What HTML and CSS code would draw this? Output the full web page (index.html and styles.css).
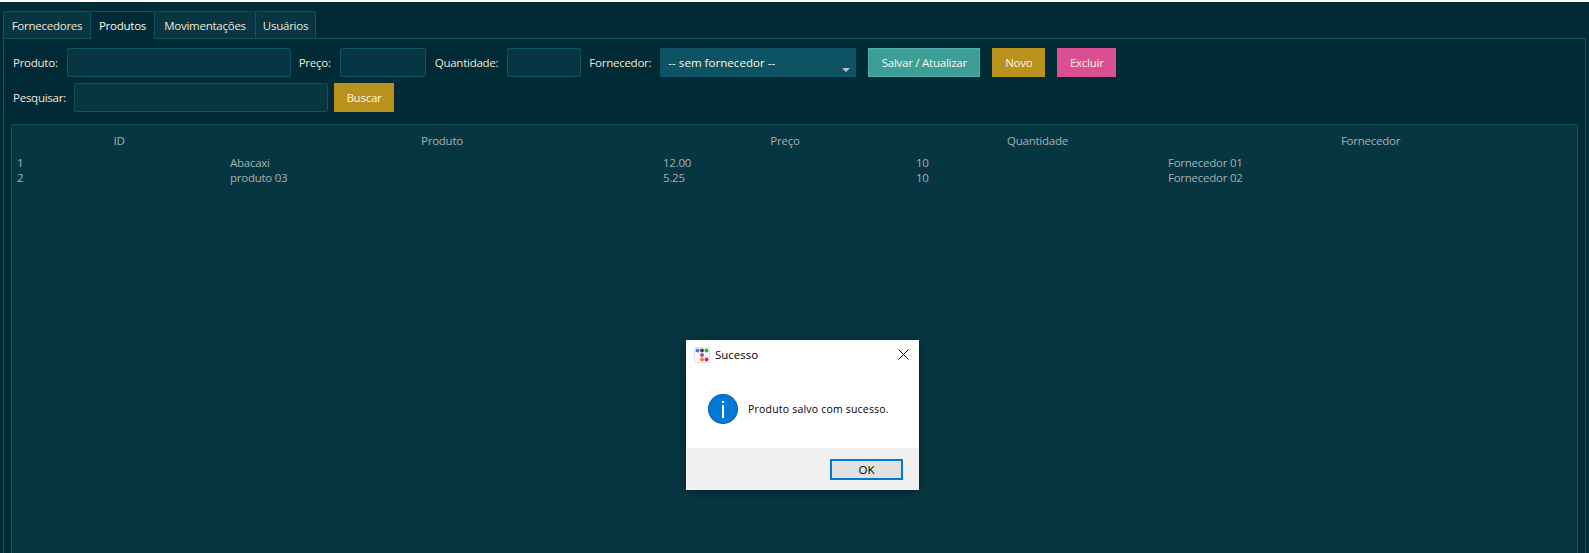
FILE: index.html
```html
<!DOCTYPE html>
<html lang="pt-BR">
<head>
    <meta charset="UTF-8">
    <title>Produtos</title>
    <link rel="stylesheet" href="styles.css">
</head>
<body>
    <div class="app">
        <nav class="tabs">
            <div class="tab tab-fornecedores">Fornecedores</div>
            <div class="tab tab-produtos tab-ativa">Produtos</div>
            <div class="tab tab-movimentacoes">Movimentações</div>
            <div class="tab tab-usuarios">Usuários</div>
        </nav>
        <main class="pane">
            <div class="linha">
                <label class="rotulo">Produto:</label>
                <input class="campo campo-produto" type="text">
                <label class="rotulo">Preço:</label>
                <input class="campo campo-preco" type="text">
                <label class="rotulo">Quantidade:</label>
                <input class="campo campo-qtd" type="text">
                <label class="rotulo">Fornecedor:</label>
                <div class="combo">-- sem fornecedor --<span class="combo-seta"></span></div>
                <button class="btn btn-salvar">Salvar / Atualizar</button>
                <button class="btn btn-novo">Novo</button>
                <button class="btn btn-excluir">Excluir</button>
            </div>
            <div class="linha linha-busca">
                <label class="rotulo rotulo-busca">Pesquisar:</label>
                <input class="campo campo-busca" type="text">
                <button class="btn btn-buscar">Buscar</button>
            </div>
            <div class="painel-tabela">
                <table class="tabela">
                    <colgroup>
                        <col class="col-id">
                        <col class="col-produto">
                        <col class="col-preco">
                        <col class="col-qtd">
                        <col>
                    </colgroup>
                    <thead>
                        <tr>
                            <th>ID</th>
                            <th>Produto</th>
                            <th>Preço</th>
                            <th>Quantidade</th>
                            <th>Fornecedor</th>
                        </tr>
                    </thead>
                    <tbody>
                        <tr>
                            <td>1</td>
                            <td>Abacaxi</td>
                            <td>12.00</td>
                            <td>10</td>
                            <td>Fornecedor 01</td>
                        </tr>
                        <tr>
                            <td>2</td>
                            <td>produto 03</td>
                            <td>5.25</td>
                            <td>10</td>
                            <td>Fornecedor 02</td>
                        </tr>
                    </tbody>
                </table>
            </div>
        </main>
    </div>

    <div class="dialogo">
        <div class="dialogo-titulo">
            <svg class="dialogo-logo" width="16" height="16" viewBox="0 0 16 16">
                <rect x="0.5" y="0.5" width="15" height="15" fill="#fafafa" stroke="#e6e6e6"/>
                <circle cx="3.5" cy="3.5" r="2" fill="#3b82f6"/>
                <circle cx="8" cy="3.5" r="2" fill="#444444"/>
                <circle cx="12.5" cy="3.5" r="2" fill="#43b02a"/>
                <circle cx="8" cy="8" r="2" fill="#9b4fb8"/>
                <circle cx="8" cy="12.5" r="2" fill="#f47b20"/>
                <circle cx="12.5" cy="12.5" r="2" fill="#e8204e"/>
            </svg>
            <span class="dialogo-nome">Sucesso</span>
            <svg class="dialogo-fechar" width="11" height="11" viewBox="0 0 11 11">
                <path d="M0.5 0.5 L10.5 10.5 M10.5 0.5 L0.5 10.5" stroke="#111" stroke-width="1" fill="none"/>
            </svg>
        </div>
        <div class="dialogo-corpo">
            <svg class="dialogo-icone" width="30" height="30" viewBox="0 0 30 30">
                <circle cx="15" cy="15" r="15" fill="#0078d7"/>
                <circle cx="15" cy="15" r="14.5" fill="none" stroke="#1565a8" stroke-width="1"/>
                <rect x="14" y="7" width="2" height="2" fill="#fff"/>
                <rect x="14" y="11" width="2" height="13" fill="#fff"/>
            </svg>
            <span class="dialogo-texto">Produto salvo com sucesso.</span>
        </div>
        <div class="dialogo-rodape">
            <button class="btn-ok">OK</button>
        </div>
    </div>
</body>
</html>
```

FILE: styles.css
```css
* {
    box-sizing: border-box;
}
html, body {
    margin: 0;
    padding: 0;
    height: 100%;
    overflow: hidden;
}
body {
    font-family: "Open Sans", "Noto Sans", sans-serif;
    font-size: 11.5px;
    letter-spacing: -0.25px;
    background-color: #002b36;
    color: #eee8d5;
}
.app {
    height: 100vh;
    border-top: 2px solid #fff;
    padding: 9px 3px 0 3px;
    overflow: hidden;
}
.tabs {
    display: flex;
    height: 28px;
    position: relative;
    z-index: 1;
}
.tab {
    height: 28px;
    display: flex;
    align-items: center;
    justify-content: center;
    background-color: #073642;
    color: #eee8d5;
    border: 1px solid #0e5364;
    border-left-width: 0;
    border-radius: 2px 2px 0 0;
}
.tab:first-child {
    border-left-width: 1px;
}
.tab-fornecedores {
    width: 88px;
}
.tab-produtos {
    width: 64px;
}
.tab-movimentacoes {
    width: 101px;
}
.tab-usuarios {
    width: 60px;
}
.tab-ativa {
    background-color: #002b36;
    color: #fdf6e3;
    border-bottom-color: #002b36;
}
.pane {
    margin-top: -1px;
    height: 700px;
    border: 1px solid #0e5364;
    padding: 9px 7px 0 7px;
}
.linha {
    display: flex;
    align-items: center;
    height: 29px;
    padding-left: 2px;
}
.linha-busca {
    margin-top: 6px;
}
.rotulo {
    color: #eee8d5;
    margin-right: 9px;
}
.rotulo-busca {
    margin-right: 8px;
}
.campo {
    height: 29px;
    background-color: #073642;
    border: 1px solid #0e5364;
    border-radius: 2px;
    margin-right: 9px;
    outline: none;
}
.campo-produto {
    width: 224px;
    margin-right: 8px;
}
.campo-preco {
    width: 86px;
}
.campo-qtd {
    width: 74px;
    margin-right: 8px;
}
.campo-busca {
    width: 254px;
    margin-right: 6px;
}
.combo {
    position: relative;
    width: 196px;
    height: 29px;
    padding-left: 8px;
    display: flex;
    align-items: center;
    background-color: #0e5364;
    color: #fdf6e3;
    letter-spacing: 0.05px;
    margin-right: 12px;
}
.combo-seta {
    position: absolute;
    right: 6px;
    bottom: 5px;
    border-left: 4px solid transparent;
    border-right: 4px solid transparent;
    border-top: 4px solid #b7c4c6;
}
.btn {
    height: 29px;
    padding: 0;
    border: none;
    font-family: inherit;
    font-size: 11.5px;
    letter-spacing: inherit;
    color: #fdf6e3;
    margin-right: 12px;
}
.btn-salvar {
    width: 112px;
    background-color: #3d9e98;
    border: 1px solid #4fb0aa;
}
.btn-novo {
    width: 53px;
    background-color: #b8921c;
}
.btn-excluir {
    width: 59px;
    background-color: #d94f92;
}
.btn-buscar {
    width: 60px;
    background-color: #b8921c;
}
.painel-tabela {
    margin-top: 12px;
    height: 600px;
    background-color: #073642;
    border: 1px solid #0e5364;
    border-radius: 2px;
}
.tabela {
    width: 100%;
    table-layout: fixed;
    border-collapse: collapse;
    color: #a3b1b1;
}
.col-id {
    width: 213px;
}
.col-produto {
    width: 433px;
}
.col-preco {
    width: 253px;
}
.col-qtd {
    width: 252px;
}
.tabela th {
    font-weight: normal;
    height: 30px;
    padding: 0 4px 0 5px;
    text-align: center;
}
.tabela td {
    height: 15px;
    padding: 0 4px 0 5px;
    line-height: 15px;
}
.dialogo {
    position: absolute;
    left: 686px;
    top: 340px;
    width: 233px;
    height: 150px;
    background-color: #fff;
    color: #000;
    display: flex;
    flex-direction: column;
    box-shadow: 0 2px 12px rgba(0, 0, 0, 0.35);
    letter-spacing: 0;
}
.dialogo-titulo {
    height: 29px;
    display: flex;
    align-items: center;
    padding: 0 10px 0 8px;
}
.dialogo-nome {
    margin-left: 5px;
    flex: 1;
}
.dialogo-corpo {
    flex: 1;
    display: flex;
    align-items: center;
    padding: 0 0 0 22px;
}
.dialogo-texto {
    margin-left: 10px;
    font-size: 10.5px;
    letter-spacing: 0.2px;
}
.dialogo-rodape {
    height: 42px;
    background-color: #f0f0f0;
    display: flex;
    align-items: center;
    justify-content: flex-end;
    padding-right: 16px;
}
.btn-ok {
    width: 73px;
    height: 21px;
    padding: 0;
    background-color: #e1e1e1;
    border: 2px solid #0078d7;
    font-family: inherit;
    font-size: 11.5px;
    color: #000;
}
```
